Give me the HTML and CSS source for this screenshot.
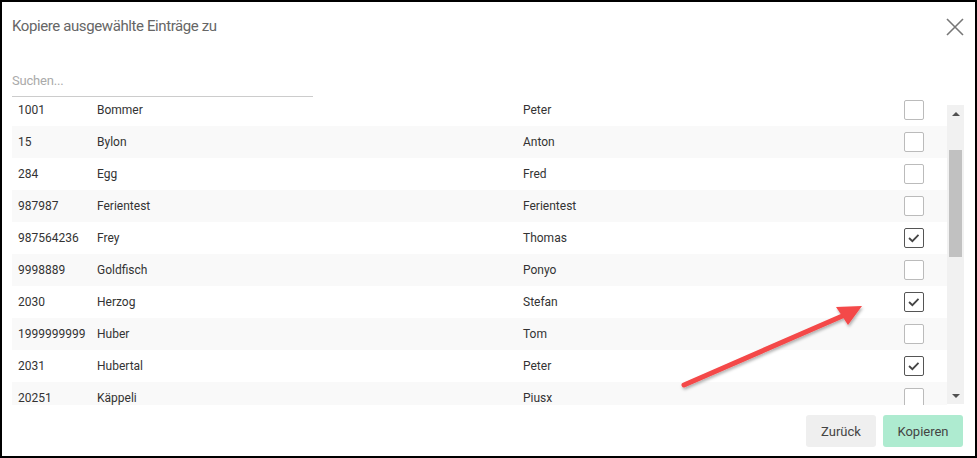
FILE: index.html
```html
<!DOCTYPE html>
<html lang="de">
<head>
    <meta charset="UTF-8">
    <meta name="viewport" content="width=device-width, initial-scale=1.0">
    <title>Kopiere ausgewählte Einträge zu</title>
    <link rel="stylesheet" href="styles.css">
</head>
<body>
    <div class="dialog">
        <div class="header">
            <h1 class="title">Kopiere ausgewählte Einträge zu</h1>
            <button class="close" aria-label="Schliessen">
                <svg width="18" height="18" viewBox="0 0 18 18">
                    <path d="M1 1 L17 17 M17 1 L1 17" stroke="#777" stroke-width="1.6" fill="none"/>
                </svg>
            </button>
        </div>
        <div class="search">
            <input type="text" placeholder="Suchen..." />
        </div>
        <div class="list-wrap">
            <div class="list">
                <div class="rows">
                    <div class="row"><span>1001</span><span>Bommer</span><span>Peter</span><span class="check"></span></div>
                    <div class="row"><span>15</span><span>Bylon</span><span>Anton</span><span class="check"></span></div>
                    <div class="row"><span>284</span><span>Egg</span><span>Fred</span><span class="check"></span></div>
                    <div class="row"><span>987987</span><span>Ferientest</span><span>Ferientest</span><span class="check"></span></div>
                    <div class="row"><span>987564236</span><span>Frey</span><span>Thomas</span><span class="check checked"><svg viewBox="0 0 20 20"><path d="M4.5 10 L8.2 13.6 L15 6.6"/></svg></span></div>
                    <div class="row"><span>9998889</span><span>Goldfisch</span><span>Ponyo</span><span class="check"></span></div>
                    <div class="row"><span>2030</span><span>Herzog</span><span>Stefan</span><span class="check checked"><svg viewBox="0 0 20 20"><path d="M4.5 10 L8.2 13.6 L15 6.6"/></svg></span></div>
                    <div class="row"><span>1999999999</span><span>Huber</span><span>Tom</span><span class="check"></span></div>
                    <div class="row"><span>2031</span><span>Hubertal</span><span>Peter</span><span class="check checked"><svg viewBox="0 0 20 20"><path d="M4.5 10 L8.2 13.6 L15 6.6"/></svg></span></div>
                    <div class="row"><span>20251</span><span>Käppeli</span><span>Piusx</span><span class="check"></span></div>
                </div>
            </div>
            <div class="scrollbar">
                <div class="sb-btn"><span class="tri-up"></span></div>
                <div class="sb-track"><div class="sb-thumb"></div></div>
                <div class="sb-btn"><span class="tri-down"></span></div>
            </div>
        </div>
        <div class="footer">
            <button class="btn btn-back">Zurück</button>
            <button class="btn btn-copy">Kopieren</button>
        </div>
        <!-- annotation arrow from the screenshot -->
        <svg class="annotation" width="977" height="458" viewBox="0 0 977 458">
            <defs>
                <filter id="shadow" x="-10%" y="-10%" width="120%" height="130%">
                    <feDropShadow dx="1" dy="2" stdDeviation="1.5" flood-color="#000" flood-opacity="0.3"/>
                </filter>
            </defs>
            <g filter="url(#shadow)" fill="#f44848">
                <path d="M684 385 L847 314" stroke="#f44848" stroke-width="5" stroke-linecap="round"/>
                <path d="M862 306 L836 307 L848 325 Z"/>
            </g>
        </svg>
    </div>
</body>
</html>
```

FILE: styles.css
```css
* {
    box-sizing: border-box;
}
body {
    margin: 0;
    font-family: Roboto, "Liberation Sans", sans-serif;
    background-color: #fff;
}
.dialog {
    position: relative;
    width: 977px;
    height: 458px;
    border: 2px solid #000;
    padding: 0 11px 0 10px;
    display: flex;
    flex-direction: column;
    background-color: #fff;
}
.header {
    height: 48px;
    display: flex;
    align-items: center;
    justify-content: space-between;
}
.title {
    margin: 0;
    font-size: 15px;
    font-weight: 400;
    color: #666;
    letter-spacing: -0.4px;
}
.close {
    border: none;
    background: none;
    padding: 0;
    margin-top: 2px;
    width: 18px;
    height: 18px;
}
.search {
    height: 47px;
    display: flex;
    align-items: flex-end;
}
.search input {
    width: 301px;
    height: 32px;
    border: none;
    border-bottom: 1px solid #ccc;
    padding: 0;
    font-family: inherit;
    font-size: 13px;
    letter-spacing: -0.2px;
    color: #333;
    outline: none;
}
.search input::placeholder {
    color: #aaa;
}
.list-wrap {
    height: 308px;
    display: flex;
}
.list {
    flex: 1;
    overflow: hidden;
}
.rows {
    margin-top: -3px;
}
.row {
    height: 32px;
    display: grid;
    grid-template-columns: 79px 426px 1fr 20px;
    align-items: center;
    padding: 0 23px 0 6px;
    font-size: 12px;
    color: #333;
}
.row:nth-child(even) {
    background-color: #f9f9f9;
}
.check {
    width: 20px;
    height: 20px;
    border: 1px solid #bbb;
    border-radius: 2px;
    background-color: #fff;
}
.check.checked {
    border-color: #555;
}
.check svg {
    display: block;
    width: 18px;
    height: 18px;
}
.check svg path {
    fill: none;
    stroke: #444;
    stroke-width: 2;
}
.scrollbar {
    width: 17px;
    margin-top: 8px;
    margin-bottom: 1px;
    background-color: #f1f1f1;
    display: flex;
    flex-direction: column;
}
.sb-btn {
    height: 17px;
    display: flex;
    align-items: center;
    justify-content: center;
}
.tri-up {
    border-left: 4px solid transparent;
    border-right: 4px solid transparent;
    border-bottom: 4px solid #505050;
}
.tri-down {
    border-left: 4px solid transparent;
    border-right: 4px solid transparent;
    border-top: 4px solid #505050;
}
.sb-track {
    flex: 1;
    padding: 28px 2px 0;
}
.sb-thumb {
    height: 107px;
    background-color: #c1c1c1;
}
.footer {
    flex: 1;
    display: flex;
    justify-content: flex-end;
    align-items: flex-start;
    gap: 7px;
    padding-top: 10px;
}
.btn {
    height: 32px;
    border: none;
    border-radius: 3px;
    font-family: inherit;
    font-size: 13px;
    color: #444;
}
.btn-back {
    width: 70px;
    background-color: #efefef;
}
.btn-copy {
    width: 80px;
    margin-right: 1px;
    background-color: #aeebd0;
}
.annotation {
    position: absolute;
    left: -2px;
    top: -2px;
    pointer-events: none;
}
```
